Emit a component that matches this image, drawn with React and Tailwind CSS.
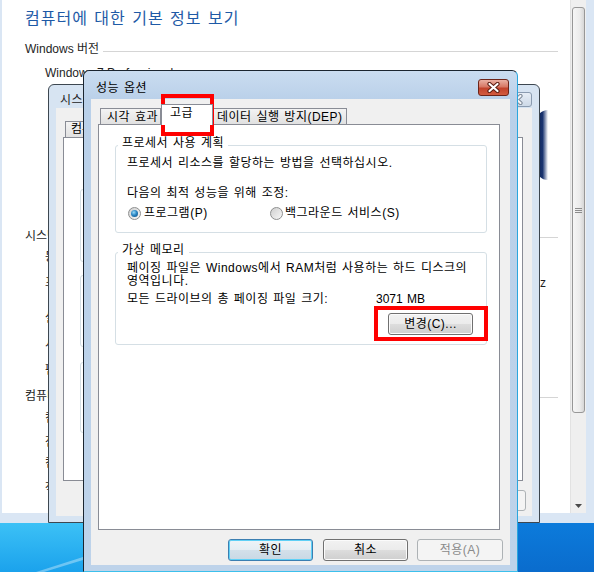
import React from "react";

const F = "font-['Liberation_Sans','Noto_Sans_CJK_KR',sans-serif]";

function CloseX({ color, outline }) {
  return (
    <svg width="13" height="11" viewBox="0 0 13 11">
      <path d="M2.5 2 L10.5 9 M10.5 2 L2.5 9" stroke={outline} strokeWidth="4.2" strokeLinecap="round" />
      <path d="M2.5 2 L10.5 9 M10.5 2 L2.5 9" stroke={color} strokeWidth="2.2" strokeLinecap="round" />
    </svg>
  );
}

function Btn({ children, kind, w }) {
  const cls =
    kind === "default"
      ? "h-[22px] rounded-[3px] border border-[#3c7fb1] shadow-[inset_0_0_0_1px_#5fd0f6] bg-[linear-gradient(to_bottom,#eef4f8_0%,#e4edf3_50%,#d3e0ea_50%,#c8d8e4_100%)] flex items-center justify-center leading-[14px] text-black"
      : kind === "disabled"
      ? "h-[22px] rounded-[3px] border border-[#adb2b5] bg-[#f4f4f4] flex items-center justify-center leading-[14px] text-[#8a8a8a]"
      : "h-[22px] rounded-[3px] border border-[#707070] shadow-[inset_0_0_0_1px_#fbfbfb] bg-[linear-gradient(to_bottom,#f2f2f2_0%,#ebebeb_50%,#dddddd_50%,#cfcfcf_100%)] flex items-center justify-center leading-[14px] text-black";
  return (
    <div className={cls} style={{ width: w }}>
      {children}
    </div>
  );
}

function Radio({ checked }) {
  return (
    <span className="w-[13px] h-[13px] rounded-full border border-[#8e8f8f] bg-[linear-gradient(135deg,#cfcfcf,#f8f8f8)] flex items-center justify-center">
      {checked && (
        <span className="w-[7px] h-[7px] rounded-full bg-[radial-gradient(circle_at_40%_35%,#9adcf8_0%,#2a86c4_45%,#0d4a7a_100%)]" />
      )}
    </span>
  );
}

export default function App() {
  return (
    <div className={`relative w-[594px] h-[572px] overflow-hidden bg-white text-[12px] text-black ${F}`}>
      {/* Control panel window behind */}
      <div className="absolute left-0 top-0 w-[594px] h-[523px] flex flex-col bg-[#dae6f4]">
        <div className="flex h-[513px]">
          <div className="w-[2px] bg-[#dae6f4]" />
          <div className="flex-1 bg-white flex flex-col pl-[23px] pr-[12px] text-[#1e1e1e]">
            <h1 className="mt-[9px] text-[16px] leading-[20px] tracking-[1px] [word-spacing:1px] text-[#1e5aa6]">컴퓨터에 대한 기본 정보 보기</h1>
            <div className="mt-[12px] flex items-center gap-[4px] h-[16px]">
              <span className="leading-[16px]">Windows 버전</span>
              <div className="flex-1 h-px bg-[#d5d5d5] mt-[4px]" />
            </div>
            <div className="flex h-[163px] mt-[8px]">
              <div className="pl-[20px] leading-[16px]">Windows 7 Professional</div>
              <div className="ml-auto mr-[10px] mt-[45px] w-[12px] h-[70px] rounded-l-full bg-[linear-gradient(to_right,#0b1f4e,#1a3470_55%,rgba(255,255,255,0))]" />
            </div>
            <div className="flex items-center gap-[4px] h-[16px]">
              <span className="leading-[16px]">시스템</span>
              <div className="flex-1 h-px bg-[#d5d5d5] mt-[2px]" />
            </div>
            <div className="pl-[20px] flex flex-col leading-[16px]">
              <div className="mt-[5px]">등급:</div>
              <div className="mt-[10px] flex justify-between pr-[12px]">
                <span>프로세서:</span>
                <span>Intel(R) Core(TM) i5 CPU 2.40GHz</span>
              </div>
              <div className="mt-[19px]">설치된 메모리(RAM):</div>
              <div className="mt-[10px]">시스템 종류:</div>
              <div className="mt-[10px]">펜 및 터치:</div>
            </div>
            <div className="mt-[10px] flex items-center gap-[4px] h-[16px]">
              <span className="leading-[16px]">컴퓨터 이름, 도메인 및 작업 그룹 설정</span>
              <div className="flex-1 h-px bg-[#d5d5d5] mt-[2px]" />
            </div>
            <div className="pl-[20px] flex flex-col leading-[16px]">
              <div className="mt-[6px]">컴퓨터 이름:</div>
              <div className="mt-[8px]">전체 컴퓨터 이름:</div>
              <div className="mt-[5px]">컴퓨터 설명:</div>
              <div className="mt-[9px]">작업 그룹:</div>
            </div>
          </div>
          {/* scrollbar */}
          <div className="w-[16px] bg-[#efefef] border-l border-[#e2e2e2] flex flex-col">
            <div className="mt-[7px] mx-px h-[406px] rounded-[3px] border border-[#979797] bg-[linear-gradient(to_right,#f6f6f6,#ececec_60%,#d6d6d6)] flex items-center justify-center">
              <div className="flex flex-col gap-[1px]">
                <div className="w-[7px] h-px bg-[#8c8c8c]" />
                <div className="w-[7px] h-px bg-[#8c8c8c]" />
                <div className="w-[7px] h-px bg-[#8c8c8c]" />
              </div>
            </div>
            <div className="flex-1" />
            <div className="h-[14px] flex items-center justify-center">
              <svg width="7" height="4" viewBox="0 0 7 4">
                <path d="M0 0 L7 0 L3.5 4 Z" fill="#4a4a4a" />
              </svg>
            </div>
          </div>
          <div className="w-[8px] bg-[#dae6f4]" />
        </div>
        <div className="h-[10px] bg-[#dae6f4]" />
      </div>

      {/* desktop */}
      <div className="absolute left-0 top-[523px] w-[594px] h-[49px] flex">
        <div className="relative w-[83px] h-full bg-[linear-gradient(to_bottom,#3cc1f6,#1ba2ec)] overflow-hidden">
          <svg className="absolute left-0 top-0" width="83" height="49" viewBox="0 0 83 49">
            <path d="M36 49 L83 34 L83 37 L44 49 Z" fill="rgba(255,255,255,0.35)" />
          </svg>
        </div>
        <div className="flex-1 bg-[#1590e0]" />
        <div className="w-[77px] h-full bg-[linear-gradient(to_bottom,#0c7bdb,#0a6ccd)]" />
      </div>

      {/* System properties window (behind) */}
      <div className="absolute left-[48px] top-[84px] w-[492px] h-[439px] rounded-t-[6px] border border-[#3d4750] bg-[#d7e4f2] flex flex-col">
        <div className="h-[23px] flex items-start justify-between pl-[11px]">
          <span className="mt-[8px] leading-[14px] tracking-[0.5px] text-[#222]">시스템 속성</span>
          <div className="mt-[7px] mr-[7px] w-[31px] h-[15px] rounded-[3px] border border-[#8a9bb0] bg-[linear-gradient(to_bottom,#e7eef6,#cdd9e7)] flex items-center justify-center">
            <CloseX color="#f4f6f9" outline="#7d8998" />
          </div>
        </div>
        <div className="flex-1 mx-[7px] mb-[6px] bg-[#f0f0f0] flex flex-col pt-[13px]">
          <div className="pl-[7px] pr-[9px]">
            <div className="flex h-[16px] pl-[2px]">
              <div className="w-[80px] h-[16px] border border-b-0 border-[#898c95] bg-[linear-gradient(to_bottom,#f3f3f3,#e1e1e1)] pl-[5px] leading-[14px]">컴퓨터 이름</div>
            </div>
            <div className="h-[344px] border border-[#898c95] bg-white pl-[16px] flex flex-col">
              <div className="mt-[51px] w-[427px] h-[73px] rounded-[3px] border border-[#d5dfe5]" />
              <div className="mt-[13px] w-[427px] h-[72px] rounded-[3px] border border-[#d5dfe5]" />
              <div className="mt-[15px] w-[427px] h-[71px] rounded-[3px] border border-[#d5dfe5]" />
            </div>
          </div>
          <div className="mt-[9px] flex justify-end gap-[6px] pr-[6px]">
            <div className="w-[75px] h-[21px] rounded-[3px] border border-[#707070] bg-[linear-gradient(to_bottom,#f2f2f2_0%,#ebebeb_50%,#dddddd_50%,#cfcfcf_100%)]" />
            <div className="w-[75px] h-[21px] rounded-[3px] border border-[#707070] bg-[linear-gradient(to_bottom,#f2f2f2_0%,#ebebeb_50%,#dddddd_50%,#cfcfcf_100%)]" />
            <div className="w-[75px] h-[21px] rounded-[3px] border border-[#adb2b5] bg-[#f4f4f4]" />
          </div>
        </div>
      </div>

      {/* Performance options dialog */}
      <div className="absolute left-[83px] top-[70px] w-[435px] h-[502px] rounded-t-[6px] border border-[#1b2530] border-r-[#2aa6de] border-b-[#3cc0ec] bg-[linear-gradient(to_bottom,#cadcf0_0px,#b9d0e9_30px,#bed3ea_100%)] flex flex-col tracking-[0.5px] [word-spacing:1px]">
        <div className="h-[28px] flex items-start justify-between pl-[12px]">
          <span className="mt-[10px] leading-[14px] text-black">성능 옵션</span>
          <div className="mt-[8px] mr-[8px] w-[31px] h-[17px] rounded-[3px] border border-[#6d2418] bg-[linear-gradient(to_bottom,#eab0a3_0%,#d77865_45%,#c2432c_55%,#d35b3f_100%)] flex items-center justify-center">
            <CloseX color="#ffffff" outline="#5b1c12" />
          </div>
        </div>
        <div className="flex-1 mx-[7px] mb-[6px] bg-[#f0f0f0] flex flex-col">
          <div className="pl-[7px] pr-[10px]">
            <div className="flex items-end h-[25px] pl-[2px]">
              <div className="w-[61px] h-[16px] border border-b-0 border-[#898c95] bg-[linear-gradient(to_bottom,#f3f3f3,#e1e1e1)] pl-[6px] pt-[1px] leading-[14px] whitespace-nowrap">시각 효과</div>
              <div className="relative z-10 -mb-px w-[52px] h-[21px] border border-b-0 border-[#898c95] bg-white pl-[8px] pt-[1px] leading-[14px]">고급</div>
              <div className="w-[134px] h-[16px] border border-b-0 border-l-0 border-[#898c95] bg-[linear-gradient(to_bottom,#f3f3f3,#e1e1e1)] pl-[4px] pt-[1px] leading-[14px] whitespace-nowrap">데이터 실행 방지(DEP)</div>
            </div>
            <div className="h-[406px] border border-[#898c95] bg-white pl-[16px] flex flex-col">
              <fieldset className="mt-[11px] w-[372px] min-w-0 rounded-[3px] border border-[#d5dfe5] pl-[2px] pb-[11px]">
                <legend className="px-[4px] pb-[4px] leading-[14px]">프로세서 사용 계획</legend>
                <div className="pl-[9px] flex flex-col">
                  <div className="mt-px leading-[16px]">프로세서 리소스를 할당하는 방법을 선택하십시오.</div>
                  <div className="mt-[14px] leading-[16px]">다음의 최적 성능을 위해 조정:</div>
                  <div className="mt-[4px] h-[16px] flex items-center">
                    <div className="ml-px flex items-center gap-[3px] w-[142px]">
                      <Radio checked />
                      <span className="leading-[16px]">프로그램(P)</span>
                    </div>
                    <div className="flex items-center gap-[2px]">
                      <Radio />
                      <span className="leading-[16px]">백그라운드 서비스(S)</span>
                    </div>
                  </div>
                </div>
              </fieldset>
              <fieldset className="mt-[10px] w-[372px] min-w-0 rounded-[3px] border border-[#d5dfe5] pl-[2px] pb-[9px]">
                <legend className="px-[4px] pb-[4px] leading-[14px]">가상 메모리</legend>
                <div className="pl-[9px] pr-[13px] flex flex-col">
                  <div className="mt-px leading-[13px] whitespace-nowrap">
                    페이징 파일은 Windows에서 RAM처럼 사용하는 하드 디스크의
                    <br />
                    영역입니다.
                  </div>
                  <div className="mt-[3px] flex leading-[16px]">
                    <span className="w-[249px]">모든 드라이브의 총 페이징 파일 크기:</span>
                    <span className="tracking-normal">3071 MB</span>
                  </div>
                  <div className="mt-[6px] flex justify-end">
                    <Btn w={85}>변경(C)...</Btn>
                  </div>
                </div>
              </fieldset>
            </div>
          </div>
          <div className="mt-[9px] flex justify-end pr-[7px]">
            <Btn kind="default" w={85}>확인</Btn>
            <div className="ml-[10px]">
              <Btn w={85}>취소</Btn>
            </div>
            <div className="ml-[9px]">
              <Btn kind="disabled" w={86}>적용(A)</Btn>
            </div>
          </div>
        </div>

        {/* red highlight boxes */}
        <div className="absolute left-[77px] top-[23px] w-[53px] h-[42px] border-[4px] border-[#ff0000]" />
        <div className="absolute left-[290px] top-[235px] w-[114px] h-[35px] border-[4px] border-[#ff0000]" />
      </div>
    </div>
  );
}
